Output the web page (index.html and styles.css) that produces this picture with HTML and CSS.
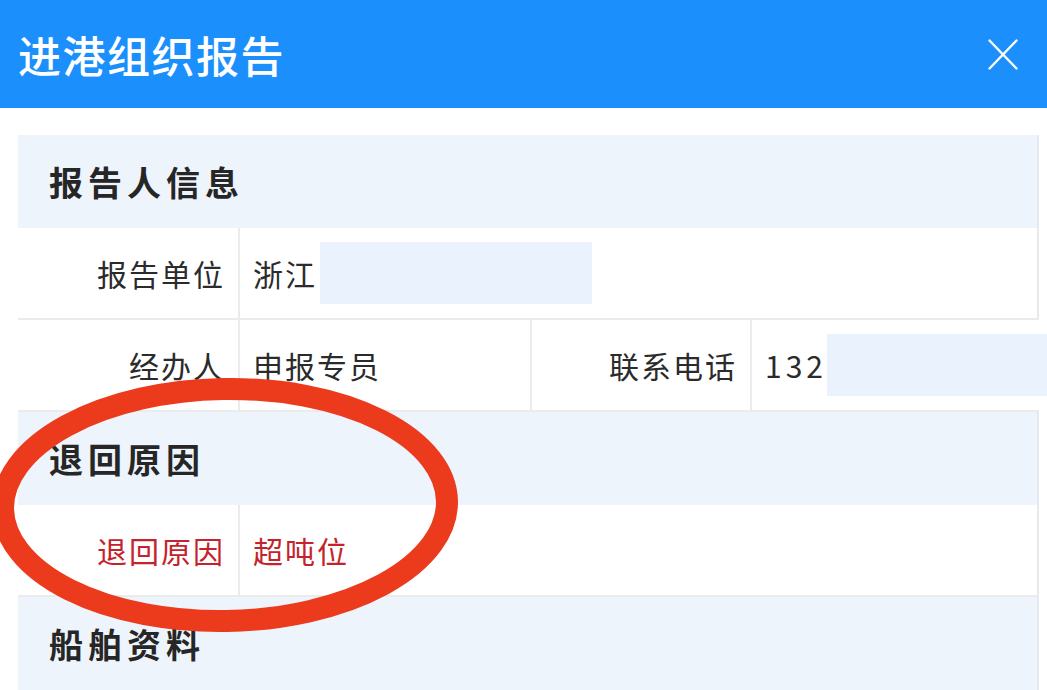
FILE: index.html
```html
<html>
	<head>
	<meta charset="utf-8">
	<link rel="stylesheet" href="styles.css">
	</head>
	<body>
		<div class="topbar">
			<h1 class="title">进港组织报告</h1>
			<span class="close">
				<svg width="30" height="31" viewBox="0 0 30 31">
					<line x1="1.5" y1="1.5" x2="28.5" y2="29.5" stroke="#fff" stroke-width="2.4" stroke-linecap="round"/>
					<line x1="28.5" y1="1.5" x2="1.5" y2="29.5" stroke="#fff" stroke-width="2.4" stroke-linecap="round"/>
				</svg>
			</span>
		</div>

		<div class="content">
			<div class="panel">
				<div class="section-head">报告人信息</div>
				<div class="row row-two">
					<div class="cell label">报告单位</div>
					<div class="cell value">浙江<span class="mask mask-unit"></span></div>
				</div>
				<div class="row row-four">
					<div class="cell label">经办人</div>
					<div class="cell value">申报专员</div>
					<div class="cell label">联系电话</div>
					<div class="cell value"><span class="digits">132</span><span class="mask mask-phone"></span></div>
				</div>

				<div class="section-head">退回原因</div>
				<div class="row row-two">
					<div class="cell label warn">退回原因</div>
					<div class="cell value warn">超吨位</div>
				</div>

				<div class="section-head">船舶资料</div>
			</div>
		</div>

		<!-- hand drawn mark on the screenshot -->
		<svg class="mark" width="1047" height="690" viewBox="0 0 1047 690">
			<ellipse cx="225" cy="505" rx="222" ry="116" fill="none" stroke="#ec3a1d" stroke-width="22" transform="rotate(-1 225 505)"/>
		</svg>
	</body>
</html>
```

FILE: styles.css
```css
*{
	margin:0px;
	padding:0px;
	box-sizing:border-box;
}
body{
	width:1047px;
	height:690px;
	overflow:hidden;
	position:relative;
	background:#ffffff;
	font-family:"Noto Sans CJK SC", "Noto Sans", sans-serif;
	color:#2b2b2b;
}
.topbar{
	height:108px;
	background:#1b8ffc;
	display:flex;
	align-items:center;
	justify-content:space-between;
	padding:0px 29px 0px 18px;
}
.title{
	color:white;
	font-size:43px;
	font-weight:500;
	letter-spacing:1.5px;
}
.close{
	display:flex;
	width:30px;
	height:31px;
}
.content{
	padding:27px 8px 0px 18px;
}
.panel{
	background:#edf4fc;
	border-right:2px solid #e6e9ee;
}
.section-head{
	height:93px;
	display:flex;
	align-items:center;
	padding-left:31px;
	font-size:34px;
	font-weight:700;
	letter-spacing:5px;
	color:#262626;
}
.row{
	display:grid;
	column-gap:2px;
	background:#ebebeb;
	border-bottom:2px solid #ebebeb;
}
.row-two{
	grid-template-columns:220px 1fr;
}
.row-four{
	grid-template-columns:220px 290px 218px 1fr;
}
.cell{
	height:90px;
	background:white;
	display:flex;
	align-items:center;
	font-size:30px;
	letter-spacing:2px;
	white-space:nowrap;
}
.label{
	justify-content:flex-end;
	padding-right:13px;
}
.value{
	padding-left:13px;
}
.digits{
	letter-spacing:4px;
}
.warn{
	color:#c4232b;
}
.mask{
	display:inline-block;
	height:62px;
	background:#eaf3fd;
}
.mask-unit{
	width:272px;
	margin-left:3px;
}
.mask-phone{
	width:240px;
	margin-left:0px;
}
.mark{
	position:absolute;
	left:0px;
	top:0px;
	pointer-events:none;
}
```
